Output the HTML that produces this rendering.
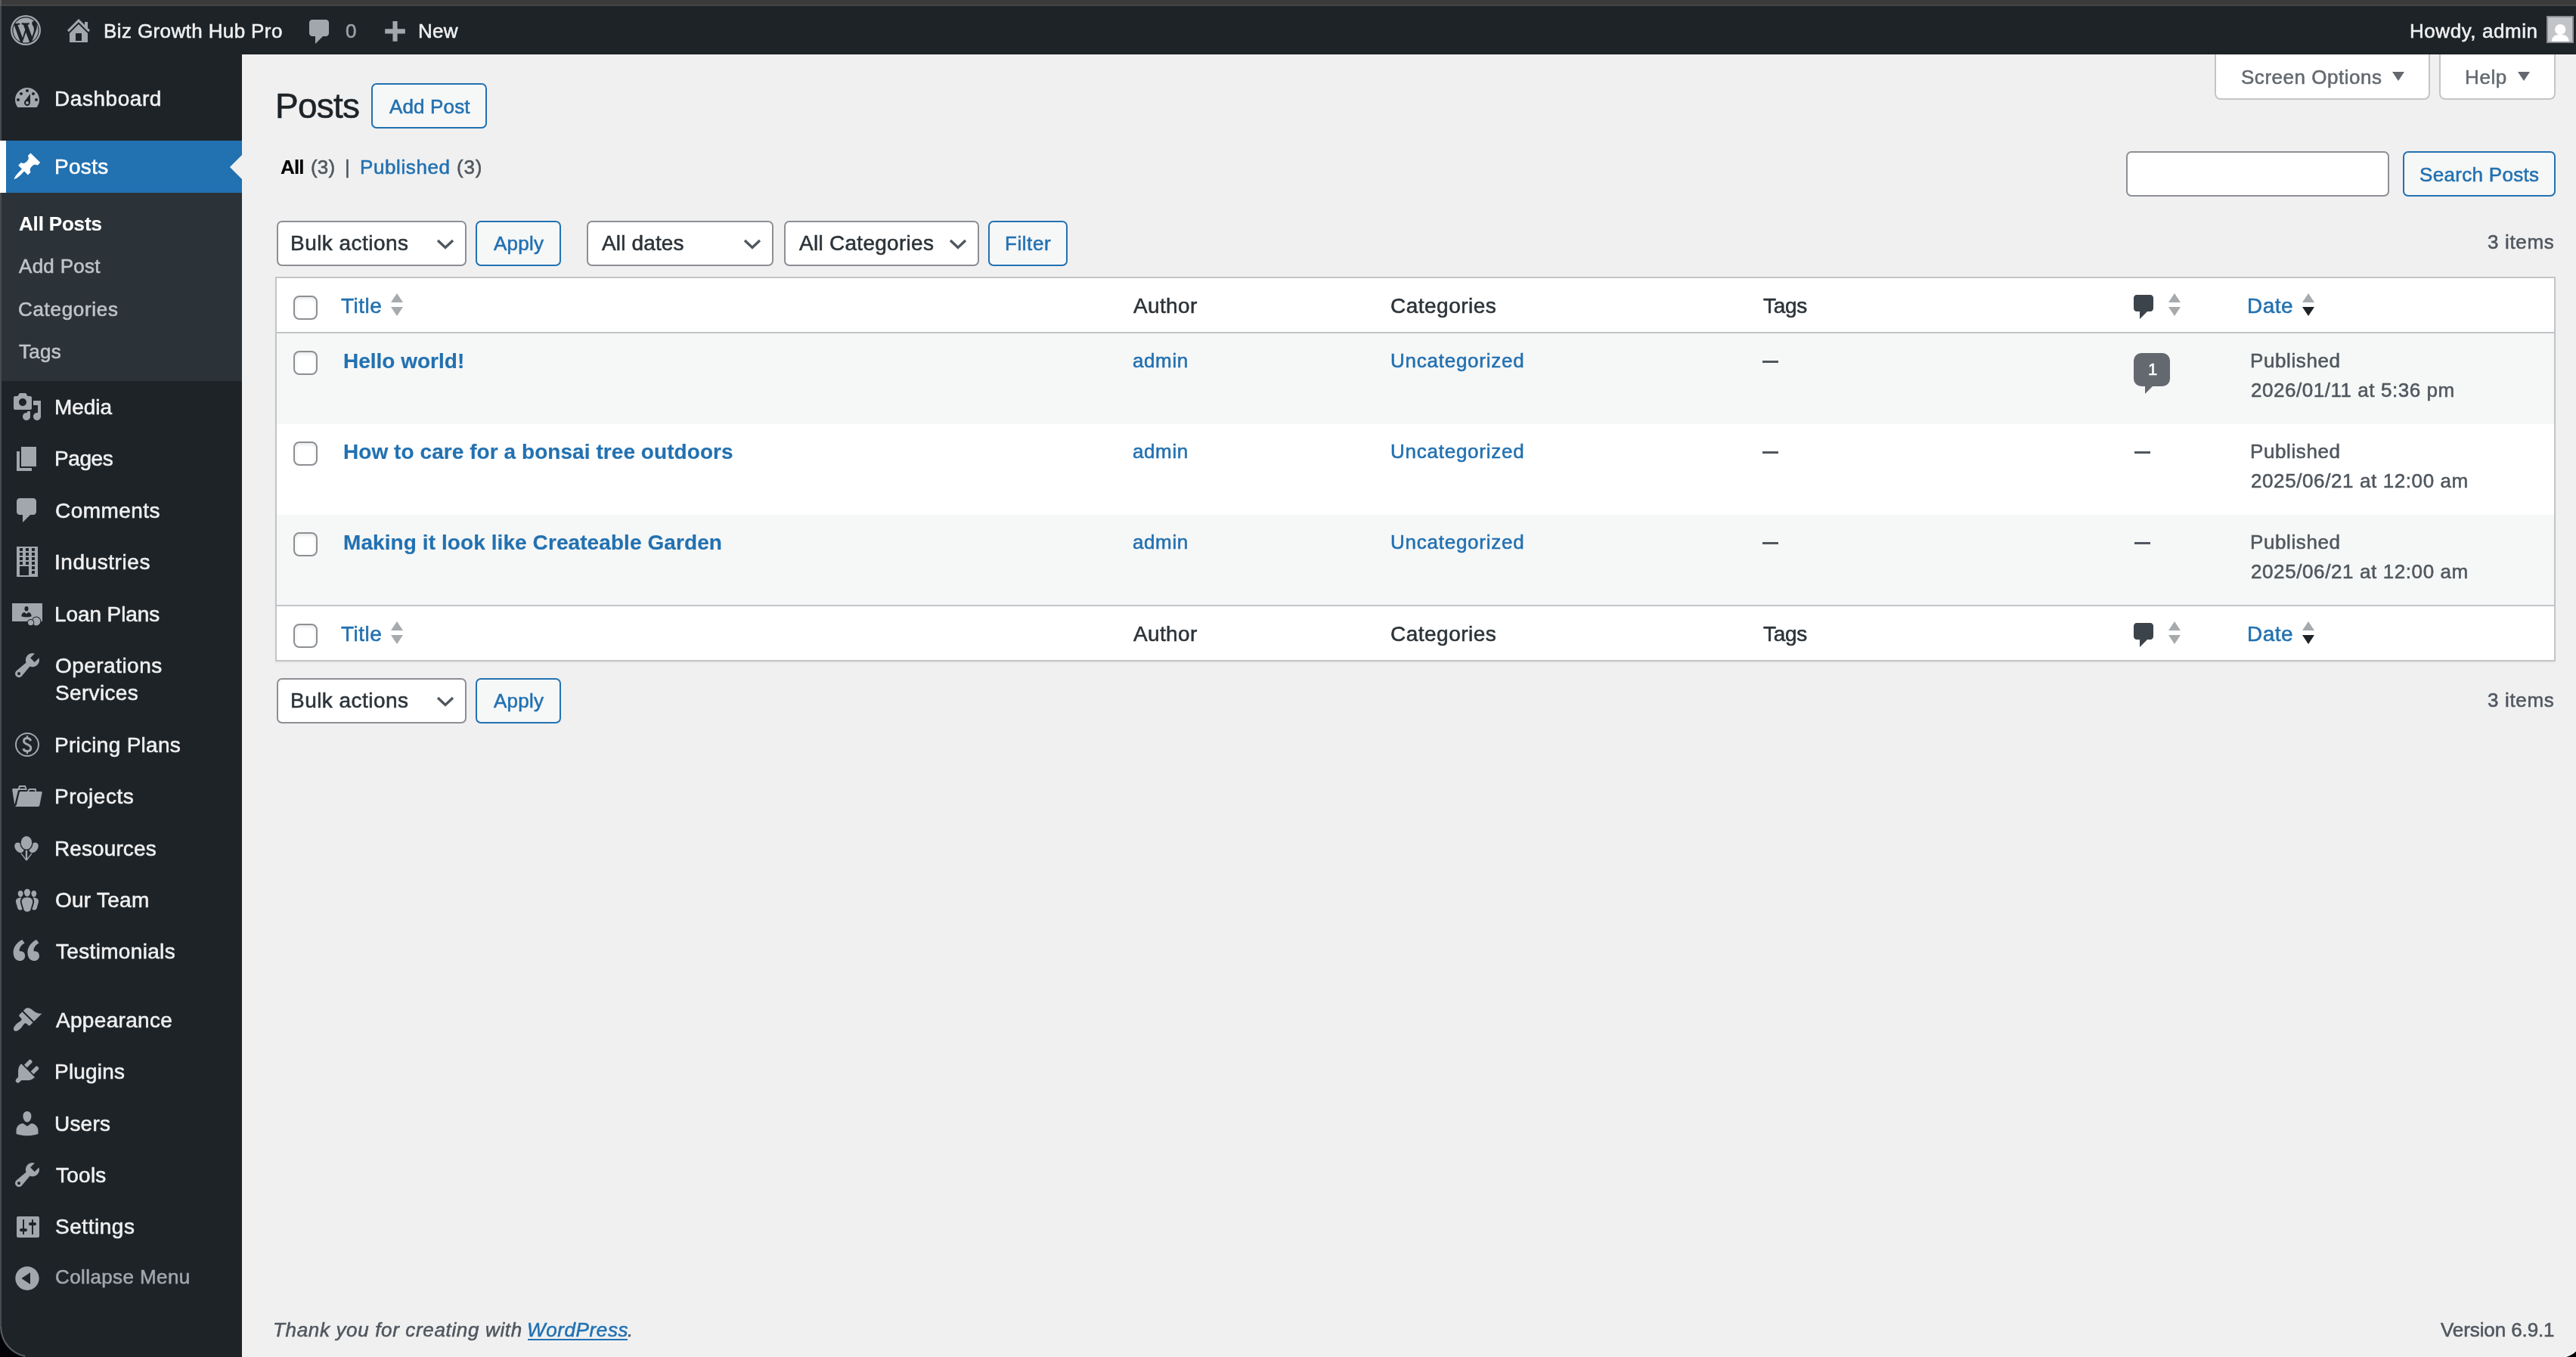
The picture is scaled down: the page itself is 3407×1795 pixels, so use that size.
<!DOCTYPE html>
<html lang="en"><head><meta charset="utf-8"><title>Posts</title><style>
*{box-sizing:border-box;margin:0;padding:0}
html,body{width:3407px;height:1795px;overflow:hidden;background:#f0f0f1}
body{position:relative;font-family:"Liberation Sans",sans-serif;color:#3c434a}
.a{position:absolute;display:block}
.t{position:absolute;white-space:pre;line-height:1;display:block;will-change:transform;-webkit-text-stroke:.55px}
.btn{border:2px solid #2271b1;border-radius:7px;background:#f6f7f7}
.inp{border:2px solid #8c8f94;border-radius:7px;background:#fff}
.so{border:2px solid #c3c4c7;border-top:none;border-radius:0 0 8px 8px;background:#fff}
.tri{width:0;height:0;border-left:8.3px solid transparent;border-right:8.3px solid transparent;border-top:12px solid #646970}
.cb{width:32px;height:32px;border:2px solid #8c8f94;border-radius:8px;background:#fff;box-shadow:inset 0 2px 4px rgba(0,0,0,.1)}
</style></head><body>
<div class="a" style="left:0;top:0;width:3407px;height:8px;background:#3b3b3b"></div>
<div class="a" style="left:0;top:6px;width:3407px;height:2px;background:#454545"></div>
<div class="a" style="left:0;top:8px;width:3407px;height:64px;background:#1d2327"></div>
<svg class="a" style="left:14px;top:20px" width="40" height="40" viewBox="0 0 20 20"><path fill="#a2a7ad" fill-rule="evenodd" d="M10 0a10 10 0 100 20 10 10 0 000-20zm0 1.1a8.9 8.9 0 110 17.8 8.9 8.9 0 010-17.8z"/><g transform="translate(10 10) scale(.934) translate(-10 -10)"><path fill="#a2a7ad" d="M7.78 15.37L4.37 6.22c.55-.02 1.17-.08 1.17-.08.5-.06.44-1.13-.06-1.11 0 0-1.45.11-2.37.11-.18 0-.37 0-.58-.01C4.12 2.69 6.87 1.11 10 1.11c2.33 0 4.45.87 6.05 2.34-.68-.11-1.65.39-1.65 1.58 0 .74.45 1.36.9 2.1.35.61.55 1.36.55 2.46 0 1.49-1.4 5-1.4 5l-3.03-8.37c.54-.02.82-.17.82-.17.5-.05.44-1.25-.06-1.22 0 0-1.44.12-2.38.12-.87 0-2.33-.12-2.33-.12-.5-.03-.56 1.2-.06 1.22l.92.08 1.26 3.41zM17.41 10c.24-.64.74-1.87.43-4.25.7 1.29 1.05 2.71 1.05 4.25 0 3.29-1.73 6.24-4.4 7.78.97-2.59 1.94-5.2 2.92-7.78zM6.1 18.09C3.12 16.65 1.11 13.53 1.11 10c0-1.3.23-2.48.72-3.59C3.25 10.3 4.67 14.2 6.1 18.09zM10.13 11.46l2.58 6.98c-.86.29-1.76.45-2.71.45-.79 0-1.57-.11-2.29-.33.81-2.38 1.62-4.74 2.42-7.1z"/></g></svg>
<svg class="a" style="left:84px;top:20px;" width="40" height="40" viewBox="0 0 20 20"><path fill="#a2a7ad" d="M16 8.5l1.53 1.53-1.06 1.06L10 4.62l-6.47 6.47-1.06-1.06L10 2.5l4 4v-2h2v4zm-6-2.46l6 5.99V18H4v-5.97zM12 17v-5H8v5h4z"/></svg>
<svg class="a" style="left:403px;top:22px;" width="40" height="40" viewBox="0 0 20 20"><path fill="#a2a7ad" d="M5 2h9c1.1 0 2 .9 2 2v7c0 1.1-.9 2-2 2h-2l-5 5v-5H5c-1.1 0-2-.9-2-2V4c0-1.1.9-2 2-2z"/></svg>
<svg class="a" style="left:501px;top:24px;" width="41" height="41" viewBox="0 0 20 20"><path fill="#a2a7ad" d="M17 7v3h-5v5H9v-5H4V7h5V2h3v5h5z"/></svg>
<div class="a" style="left:3368px;top:21px;width:36px;height:36px;background:#c3c4c7;border:2px solid #8c8f94;overflow:hidden"><svg width="32" height="32" viewBox="0 0 32 32" style="display:block"><circle cx="16.2" cy="16" r="7.1" fill="#fff"/><path d="M4.6 33c0-7.5 4.6-10.6 11.6-10.6s11.6 3.1 11.6 10.6z" fill="#fff"/></svg></div>
<div class="a" style="left:0;top:72px;width:320px;height:1723px;background:#1d2327"></div>
<div class="a" style="left:0;top:186.4px;width:320px;height:68.4px;background:#2271b1"></div>
<div class="a" style="left:304px;top:204.6px;width:0;height:0;border:16px solid transparent;border-right-color:#f0f0f1;border-left-width:0"></div>
<div class="a" style="left:0;top:254.8px;width:320px;height:249.4px;background:#2c3338"></div>
<svg class="a" style="left:16px;top:110px;" width="40" height="40" viewBox="0 0 20 20"><path fill="#a2a7ad" d="M3.76 16h12.48c1.1-1.37 1.76-3.11 1.76-5 0-4.42-3.58-8-8-8s-8 3.58-8 8c0 1.89.66 3.63 1.76 5zM10 4c.55 0 1 .45 1 1s-.45 1-1 1-1-.45-1-1 .45-1 1-1zM6 6c.55 0 1 .45 1 1s-.45 1-1 1-1-.45-1-1 .45-1 1-1zm8 0c.55 0 1 .45 1 1s-.45 1-1 1-1-.45-1-1 .45-1 1-1zm-5.37 5.55L12 7v6c0 1.1-.9 2-2 2s-2-.9-2-2c0-.57.24-1.08.63-1.45zM4 10c.55 0 1 .45 1 1s-.45 1-1 1-1-.45-1-1 .45-1 1-1zm12 0c.55 0 1 .45 1 1s-.45 1-1 1-1-.45-1-1 .45-1 1-1zm-5 3c0-.55-.45-1-1-1s-1 .45-1 1 .45 1 1 1 1-.45 1-1z"/></svg>
<svg class="a" style="left:16px;top:200.4px;" width="40" height="40" viewBox="0 0 20 20"><path fill="#fff" d="M10.44 3.02l1.82-1.82 6.36 6.35-1.83 1.82c-1.05-.68-2.48-.57-3.41.36l-.75.75c-.92.93-1.04 2.35-.35 3.41l-1.83 1.82-2.41-2.41-2.8 2.79c-.42.42-3.38 2.71-3.8 2.29s1.86-3.39 2.28-3.81l2.79-2.79L4.1 9.36l1.83-1.82c1.05.69 2.48.57 3.4-.36l.75-.75c.93-.92 1.05-2.35.36-3.41z"/></svg>
<svg class="a" style="left:16px;top:518.2px;" width="40" height="40" viewBox="0 0 20 20"><path fill="#a2a7ad" d="M13 11V4c0-.55-.45-1-1-1h-1.67L9 1H5L3.67 3H2c-.55 0-1 .45-1 1v7c0 .55.45 1 1 1h10c.55 0 1-.45 1-1zM7 4.5c1.38 0 2.5 1.12 2.5 2.5S8.38 9.5 7 9.5 4.5 8.38 4.5 7 5.62 4.5 7 4.5zM14 6h5v10.5c0 1.38-1.12 2.5-2.5 2.5S14 17.88 14 16.5s1.12-2.5 2.5-2.5c.17 0 .34.02.5.05V9h-3V6zm-4 8.05V13h2v3.5c0 1.38-1.12 2.5-2.5 2.5S7 17.88 7 16.5 8.12 14 9.5 14c.17 0 .34.02.5.05z"/></svg>
<svg class="a" style="left:16px;top:586.6px;" width="40" height="40" viewBox="0 0 20 20"><path fill="#a2a7ad" d="M6 15V2h10v13H6zm-1 1h8v2H3V5h2v11z"/></svg>
<svg class="a" style="left:16px;top:655.0px;" width="40" height="40" viewBox="0 0 20 20"><path fill="#a2a7ad" d="M5 2h9c1.1 0 2 .9 2 2v7c0 1.1-.9 2-2 2h-2l-5 5v-5H5c-1.1 0-2-.9-2-2V4c0-1.1.9-2 2-2z"/></svg>
<svg class="a" style="left:16px;top:723.4px;" width="40" height="40" viewBox="0 0 20 20"><path fill="#a2a7ad" d="M3 20h14V0H3v20zM7 3H5V1h2v2zm4 0H9V1h2v2zm4 0h-2V1h2v2zM7 6H5V4h2v2zm4 0H9V4h2v2zm4 0h-2V4h2v2zM7 9H5V7h2v2zm4 0H9V7h2v2zm4 0h-2V7h2v2zm-8 3H5v-2h2v2zm4 0H9v-2h2v2zm4 0h-2v-2h2v2zm-4 7H5v-6h6v6zm4-4h-2v-2h2v2zm0 3h-2v-2h2v2z"/></svg>
<svg class="a" style="left:16px;top:860.2px;" width="40" height="40" viewBox="0 0 20 20"><path fill="#a2a7ad" d="M16.68 9.77c-1.34 1.34-3.3 1.67-4.95.99l-5.41 6.52c-.99.99-2.59.99-3.58 0s-.99-2.59 0-3.57l6.52-5.42c-.68-1.65-.35-3.61.99-4.95 1.28-1.28 3.12-1.62 4.72-1.06l-2.89 2.89 2.82 2.82 2.86-2.87c.53 1.58.18 3.39-1.08 4.65zM3.81 16.21c.4.39 1.04.39 1.43 0 .4-.4.4-1.04 0-1.43-.39-.4-1.03-.4-1.43 0-.39.39-.39 1.03 0 1.43z"/></svg>
<svg class="a" style="left:16px;top:1033.4px;" width="40" height="40" viewBox="0 0 20 20"><path fill="#a2a7ad" d="M4 5H.78c-.37 0-.74.32-.69.84l1.56 9.99S3.5 8.47 3.86 6.7c.11-.53.61-.7.98-.7H10s-.7-2.08-.77-2.31C9.11 3.25 8.89 3 8.45 3H5.14c-.36 0-.7.23-.8.64C4.25 4.04 4 5 4 5zm4.88 0h-4s.42-1 .87-1h2.13c.48 0 1 1 1 1zM2.67 16.25c-.31.47-.76.75-1.26.75h15.73c.54 0 .92-.31 1.03-.83.44-2.19 1.68-8.44 1.68-8.44.07-.5-.3-.73-.62-.73H16V5.53c0-.16-.26-.53-.66-.53h-3.76c-.52 0-.87.58-.87.58L10 7H5.59c-.32 0-.63.19-.69.5 0 0-1.59 6.7-1.72 7.33-.07.37-.22.99-.51 1.42zM15.38 7H11s.58-1 1.13-1h2.29c.71 0 .96 1 .96 1z"/></svg>
<svg class="a" style="left:16px;top:1170.2px;" width="40" height="40" viewBox="0 0 20 20"><path fill="#a2a7ad" d="M8.03 4.46c-.29 1.28.55 3.46 1.97 3.46 1.41 0 2.25-2.18 1.96-3.46-.22-.98-1.08-1.63-1.96-1.63-.89 0-1.74.65-1.97 1.63zm-4.13.9c-.25 1.08.47 2.93 1.67 2.93s1.92-1.85 1.67-2.93c-.19-.83-.92-1.39-1.67-1.39s-1.48.56-1.67 1.39zm8.86 0c-.25 1.08.47 2.93 1.66 2.93 1.2 0 1.92-1.85 1.67-2.93-.19-.83-.92-1.39-1.67-1.39-.74 0-1.47.56-1.66 1.39zm-.59 11.43l1.25-4.3C14.2 10 12.71 8.47 10 8.47c-2.72 0-4.21 1.53-3.44 4.02l1.26 4.3C8.05 17.51 9 18 10 18c.98 0 1.94-.49 2.17-1.21zm-6.1-7.63c-.49.67-.96 1.83-.42 3.59l1.12 3.79c-.34.2-.77.31-1.2.31-.85 0-1.65-.41-1.85-1.03l-1.07-3.65c-.65-2.11.61-3.4 2.92-3.4.27 0 .54.02.79.06-.1.1-.2.22-.29.33zm8.35-.39c2.31 0 3.58 1.29 2.92 3.4l-1.07 3.65c-.2.62-1 1.03-1.85 1.03-.43 0-.86-.11-1.2-.31l1.11-3.77c.55-1.78.08-2.94-.42-3.61-.08-.11-.18-.23-.28-.33.25-.04.51-.06.79-.06z"/></svg>
<svg class="a" style="left:16px;top:1238.6px;" width="40" height="40" viewBox="0 0 20 20"><path fill="#a2a7ad" d="M8.54 12.74c0-.87-.24-1.61-.72-2.22-.73-.92-2.14-1.03-2.96-.85-.34-1.93 1.3-4.39 3.42-5.45L6.65 1.94C3.45 3.46.31 6.96.85 11.37 1.19 14.16 2.8 16 5.08 16c1 0 1.83-.29 2.48-.88.66-.59.98-1.38.98-2.38zm9.43 0c0-.87-.24-1.61-.72-2.22-.73-.92-2.14-1.03-2.96-.85-.34-1.93 1.3-4.39 3.42-5.45l-1.63-2.28c-3.2 1.52-6.34 5.02-5.8 9.43.34 2.79 1.95 4.63 4.23 4.63 1 0 1.83-.29 2.48-.88.66-.59.98-1.38.98-2.38z"/></svg>
<svg class="a" style="left:16px;top:1329.0px;" width="40" height="40" viewBox="0 0 20 20"><path fill="#a2a7ad" d="M14.48 11.06L7.41 3.99l1.5-1.5c.5-.56 2.3-.47 3.51.32 1.21.8 1.43 1.28 2.91 2.1 1.18.64 2.45 1.26 4.45.85zm-.71.71L6.7 4.7 4.93 6.47c-.39.39-.39 1.02 0 1.41l1.06 1.06c.39.39.39 1.03 0 1.42-.6.6-1.43 1.11-2.21 1.69-.35.26-.7.53-1.01.84C1.43 14.23.4 16.08 1.4 17.07c.99 1 2.84-.03 4.18-1.36.31-.31.58-.66.85-1.02.57-.78 1.08-1.61 1.69-2.21.39-.39 1.02-.39 1.41 0l1.06 1.06c.39.39 1.02.39 1.41 0z"/></svg>
<svg class="a" style="left:16px;top:1397.4px;" width="40" height="40" viewBox="0 0 20 20"><path fill="#a2a7ad" d="M13.11 4.36L9.87 7.6 8 5.73l3.24-3.24c.35-.34 1.05-.2 1.56.32.52.51.66 1.21.31 1.55zm-8 1.77l.91-1.12 9.01 9.01-1.19.84c-.71.71-2.63 1.16-3.82 1.16H6.14L4.9 17.26c-.59.59-1.54.59-2.12 0-.59-.58-.59-1.53 0-2.12l1.24-1.24v-3.88c0-1.13.4-3.19 1.09-3.89zm7.26 3.97l3.24-3.24c.34-.35 1.04-.21 1.55.31.52.51.66 1.21.31 1.55l-3.24 3.25z"/></svg>
<svg class="a" style="left:16px;top:1465.8px;" width="40" height="40" viewBox="0 0 20 20"><path fill="#a2a7ad" d="M10 9.25c-2.27 0-2.73-3.44-2.73-3.44C7 4.02 7.82 2 9.97 2c2.16 0 2.98 2.02 2.71 3.81 0 0-.41 3.44-2.68 3.44zm0 2.57L12.72 10c2.39 0 4.52 2.33 4.52 4.53v2.49s-3.65 1.13-7.24 1.13c-3.65 0-7.24-1.13-7.24-1.13v-2.49c0-2.25 1.94-4.48 4.47-4.48z"/></svg>
<svg class="a" style="left:16px;top:1534.2px;" width="40" height="40" viewBox="0 0 20 20"><path fill="#a2a7ad" d="M16.68 9.77c-1.34 1.34-3.3 1.67-4.95.99l-5.41 6.52c-.99.99-2.59.99-3.58 0s-.99-2.59 0-3.57l6.52-5.42c-.68-1.65-.35-3.61.99-4.95 1.28-1.28 3.12-1.62 4.72-1.06l-2.89 2.89 2.82 2.82 2.86-2.87c.53 1.58.18 3.39-1.08 4.65zM3.81 16.21c.4.39 1.04.39 1.43 0 .4-.4.4-1.04 0-1.43-.39-.4-1.03-.4-1.43 0-.39.39-.39 1.03 0 1.43z"/></svg>
<svg class="a" style="left:16px;top:1602.6px;" width="40" height="40" viewBox="0 0 20 20"><path fill="#a2a7ad" d="M18 16V4c0-.55-.45-1-1-1H4c-.55 0-1 .45-1 1v12c0 .55.45 1 1 1h13c.55 0 1-.45 1-1zM8 11h1c.55 0 1 .45 1 1s-.45 1-1 1H8v1.5c0 .28-.22.5-.5.5s-.5-.22-.5-.5V13H6c-.55 0-1-.45-1-1s.45-1 1-1h1V5.5c0-.28.22-.5.5-.5s.5.22.5.5V11zm5-2h-1c-.55 0-1-.45-1-1s.45-1 1-1h1V5.5c0-.28.22-.5.5-.5s.5.22.5.5V7h1c.55 0 1 .45 1 1s-.45 1-1 1h-1v5.5c0 .28-.22.5-.5.5s-.5-.22-.5-.5V9z"/></svg>
<svg class="a" style="left:16px;top:1671.0px;" width="40" height="40" viewBox="0 0 20 20"><path fill="#a2a7ad" d="M10 2.16c4.33 0 7.84 3.51 7.84 7.84s-3.51 7.84-7.84 7.84S2.16 14.33 2.16 10 5.67 2.16 10 2.16zm2 11.72V6.12L6.18 9.97z"/></svg>
<svg class="a" style="left:16px;top:791.8px" width="40" height="40" viewBox="0 0 20 20">
<rect x="0" y="3" width="20" height="12" fill="#a2a7ad"/>
<ellipse cx="9.5" cy="6.6" rx="1.25" ry="1.6" fill="#1d2327"/>
<path d="M6.2 11.6c0-1.5.9-2.6 2-2.6l1.3 1 1.3-1c1.1 0 2 1.1 2 2.6 0 0-1.2.55-3.3.55s-3.3-.55-3.3-.55z" fill="#1d2327"/>
<circle cx="16" cy="15" r="3.2" fill="#1d2327"/><circle cx="16" cy="15" r="2.7" fill="#a2a7ad"/>
<circle cx="12.3" cy="15.8" r="2.3" fill="#1d2327"/><circle cx="12.3" cy="15.8" r="1.8" fill="#a2a7ad"/>
</svg>
<svg class="a" style="left:16px;top:965.0px" width="40" height="40" viewBox="0 0 20 20">
<circle cx="10" cy="10" r="7.5" fill="none" stroke="#a2a7ad" stroke-width="1"/>
<path d="M12.35 7.5C12 6.3 11.2 5.75 10 5.75 8.6 5.75 7.75 6.5 7.75 7.65 7.75 10.3 12.4 9.3 12.4 12.25 12.4 13.6 11.4 14.35 10 14.35 8.6 14.35 7.75 13.7 7.4 12.6" fill="none" stroke="#a2a7ad" stroke-width="1.45"/><path d="M9.45 4h1.1v2h-1.1zM9.45 14.1h1.1v2h-1.1z" fill="#a2a7ad"/>
</svg>
<svg class="a" style="left:16px;top:1101.8px" width="40" height="40" viewBox="0 0 20 20">
<g stroke="#a2a7ad" fill="none"><path stroke-width=".7" d="M6 13.4L9.5 18.1M13 13.4L9.5 18.1"/><path stroke-width="1.2" d="M9.5 10.5V17.6"/></g>
<ellipse cx="4.75" cy="9.6" rx="2.7" ry="3.75" transform="rotate(-38 4.75 9.6)" fill="#a2a7ad"/>
<ellipse cx="14.25" cy="9.6" rx="2.7" ry="3.75" transform="rotate(38 14.25 9.6)" fill="#a2a7ad"/>
<ellipse cx="9.5" cy="6.4" rx="3.98" ry="4.73" fill="#a2a7ad" stroke="#1d2327" stroke-width=".66"/>
</svg>
<div class="a" style="left:0;top:8px;width:2px;height:1748px;background:#454b50"></div>
<div class="a" style="left:0;top:0;width:2px;height:8px;background:#585d62"></div>
<div class="a" style="left:0;top:186.4px;width:8px;height:68.4px;background:#fff"></div>
<div class="a btn" style="left:491px;top:110px;width:153px;height:60px"></div>
<div class="a so" style="left:2929px;top:72px;width:285px;height:60px"></div>
<div class="a tri" style="left:3163.6px;top:94.8px"></div>
<div class="a so" style="left:3226px;top:72px;width:154px;height:60px"></div>
<div class="a tri" style="left:3329.8px;top:94.8px"></div>
<div class="a inp" style="left:2812px;top:200px;width:348px;height:60px"></div>
<div class="a btn" style="left:3178px;top:200px;width:202px;height:60px"></div>
<div class="a inp" style="left:366px;top:292px;width:251px;height:60px"></div>
<svg class="a" style="left:577px;top:316px" width="24" height="14" viewBox="0 0 24 14"><path d="M2 2l10 9.5L22 2" fill="none" stroke="#50575e" stroke-width="3.4"/></svg>
<div class="a btn" style="left:629px;top:292px;width:113px;height:60px"></div>
<div class="a inp" style="left:776px;top:292px;width:247px;height:60px"></div>
<svg class="a" style="left:983px;top:316px" width="24" height="14" viewBox="0 0 24 14"><path d="M2 2l10 9.5L22 2" fill="none" stroke="#50575e" stroke-width="3.4"/></svg>
<div class="a inp" style="left:1037px;top:292px;width:258px;height:60px"></div>
<svg class="a" style="left:1255px;top:316px" width="24" height="14" viewBox="0 0 24 14"><path d="M2 2l10 9.5L22 2" fill="none" stroke="#50575e" stroke-width="3.4"/></svg>
<div class="a btn" style="left:1307px;top:292px;width:105px;height:60px"></div>
<div class="a" style="left:364px;top:366px;width:3016px;height:509px;background:#fff;border:2px solid #c3c4c7;box-shadow:0 2px 2px rgba(0,0,0,.04)"></div>
<div class="a" style="left:366px;top:439px;width:3012px;height:2px;background:#c3c4c7"></div>
<div class="a" style="left:366px;top:441px;width:3012px;height:120px;background:#f6f7f7"></div>
<div class="a" style="left:366px;top:681px;width:3012px;height:119px;background:#f6f7f7"></div>
<div class="a" style="left:366px;top:800px;width:3012px;height:2px;background:#c3c4c7"></div>
<div class="a cb" style="left:388px;top:391px"></div>
<svg class="a" style="left:517.3px;top:388.09999999999997px" width="16" height="30" viewBox="0 0 16 30"><path d="M8 0L16 12H0z" fill="#a7aaad"/><path d="M8 30L16 18H0z" fill="#a7aaad"/></svg>
<svg class="a" style="left:2816px;top:385.9px;" width="40" height="40" viewBox="0 0 20 20"><path fill="#3c434a" d="M5 2h9c1.1 0 2 .9 2 2v7c0 1.1-.9 2-2 2h-2l-5 5v-5H5c-1.1 0-2-.9-2-2V4c0-1.1.9-2 2-2z"/></svg>
<svg class="a" style="left:2868px;top:388.09999999999997px" width="16" height="30" viewBox="0 0 16 30"><path d="M8 0L16 12H0z" fill="#a7aaad"/><path d="M8 30L16 18H0z" fill="#a7aaad"/></svg>
<svg class="a" style="left:3045.2px;top:388.09999999999997px" width="16" height="30" viewBox="0 0 16 30"><path d="M8 0L16 12H0z" fill="#a7aaad"/><path d="M8 30L16 18H0z" fill="#1d2327"/></svg>
<div class="a cb" style="left:388px;top:825px"></div>
<svg class="a" style="left:517.3px;top:822.0px" width="16" height="30" viewBox="0 0 16 30"><path d="M8 0L16 12H0z" fill="#a7aaad"/><path d="M8 30L16 18H0z" fill="#a7aaad"/></svg>
<svg class="a" style="left:2816px;top:819.8px;" width="40" height="40" viewBox="0 0 20 20"><path fill="#3c434a" d="M5 2h9c1.1 0 2 .9 2 2v7c0 1.1-.9 2-2 2h-2l-5 5v-5H5c-1.1 0-2-.9-2-2V4c0-1.1.9-2 2-2z"/></svg>
<svg class="a" style="left:2868px;top:822.0px" width="16" height="30" viewBox="0 0 16 30"><path d="M8 0L16 12H0z" fill="#a7aaad"/><path d="M8 30L16 18H0z" fill="#a7aaad"/></svg>
<svg class="a" style="left:3045.2px;top:822.0px" width="16" height="30" viewBox="0 0 16 30"><path d="M8 0L16 12H0z" fill="#a7aaad"/><path d="M8 30L16 18H0z" fill="#1d2327"/></svg>
<div class="a cb" style="left:388px;top:464px"></div>
<div class="a" style="left:2331px;top:477px;width:21px;height:3px;background:#50575e"></div>
<div class="a" style="left:2822px;top:467px;width:48px;height:44px;background:#646970;border-radius:10px"></div>
<div class="a" style="left:2837px;top:509px;width:0;height:0;border-top:12px solid #646970;border-right:12px solid transparent"></div>
<div class="a cb" style="left:388px;top:584px"></div>
<div class="a" style="left:2331px;top:597px;width:21px;height:3px;background:#50575e"></div>
<div class="a" style="left:2823px;top:597px;width:21px;height:3px;background:#50575e"></div>
<div class="a cb" style="left:388px;top:704px"></div>
<div class="a" style="left:2331px;top:717px;width:21px;height:3px;background:#50575e"></div>
<div class="a" style="left:2823px;top:717px;width:21px;height:3px;background:#50575e"></div>
<div class="a inp" style="left:366px;top:897px;width:251px;height:60px"></div>
<svg class="a" style="left:577px;top:921px" width="24" height="14" viewBox="0 0 24 14"><path d="M2 2l10 9.5L22 2" fill="none" stroke="#50575e" stroke-width="3.4"/></svg>
<div class="a btn" style="left:629px;top:897px;width:113px;height:60px"></div>
<div class="a ul" style="left:698px;top:1770.5px;width:132px;height:2px;background:#2271b1"></div>
<svg class="a" style="left:0;top:1745px" width="50" height="50" viewBox="0 0 50 50"><path d="M0 10A40.7 40.7 0 0 0 33 50" fill="none" stroke="#555a5f" stroke-width="4.4"/><path d="M-1 0V10H0A40.7 40.7 0 0 0 33 50H-1z" fill="#020307"/></svg>
<svg class="a" style="left:3391px;top:1783px" width="16" height="12" viewBox="0 0 16 12"><path d="M3 12Q11 9.2 16 4" fill="none" stroke="#fbfbfb" stroke-width="2"/><path d="M3.4 12Q11.2 9.4 16 4.6V12z" fill="#020307"/></svg>
<span class="t" id="t0" style="left:137.30px;top:27.69px;font-size:26px;color:#f0f0f1;letter-spacing:0.388px;">Biz Growth Hub Pro</span>
<span class="t" id="t1" style="left:457.10px;top:27.99px;font-size:26px;color:#9ca2a7;">0</span>
<span class="t" id="t2" style="left:553.40px;top:27.69px;font-size:26px;color:#f0f0f1;letter-spacing:0.300px;">New</span>
<span class="t" id="t3" style="left:3187.10px;top:27.99px;font-size:26px;color:#f0f0f1;letter-spacing:0.564px;">Howdy, admin</span>
<span class="t" id="t4" style="left:71.70px;top:116.80px;font-size:28px;color:#f0f0f1;letter-spacing:0.550px;">Dashboard</span>
<span class="t" id="t5" style="left:71.70px;top:207.20px;font-size:28px;color:#fff;letter-spacing:0.300px;">Posts</span>
<span class="t" id="t6" style="left:24.80px;top:283.09px;font-size:26px;color:#fff;font-weight:700;-webkit-text-stroke:.15px;letter-spacing:-0.175px;">All Posts</span>
<span class="t" id="t7" style="left:24.80px;top:338.79px;font-size:26px;color:#c0c4c8;letter-spacing:0.286px;">Add Post</span>
<span class="t" id="t8" style="left:23.80px;top:395.99px;font-size:26px;color:#c0c4c8;letter-spacing:0.689px;">Categories</span>
<span class="t" id="t9" style="left:24.80px;top:451.79px;font-size:26px;color:#c0c4c8;letter-spacing:0.267px;">Tags</span>
<span class="t" id="t10" style="left:71.70px;top:525.00px;font-size:28px;color:#f0f0f1;letter-spacing:-0.050px;">Media</span>
<span class="t" id="t11" style="left:71.70px;top:593.40px;font-size:28px;color:#f0f0f1;letter-spacing:-0.400px;">Pages</span>
<span class="t" id="t12" style="left:72.70px;top:661.80px;font-size:28px;color:#f0f0f1;letter-spacing:0.457px;">Comments</span>
<span class="t" id="t13" style="left:71.70px;top:730.20px;font-size:28px;color:#f0f0f1;letter-spacing:0.556px;">Industries</span>
<span class="t" id="t14" style="left:71.70px;top:798.60px;font-size:28px;color:#f0f0f1;letter-spacing:-0.089px;">Loan Plans</span>
<span class="t" id="t15" style="left:72.70px;top:867.00px;font-size:28px;color:#f0f0f1;letter-spacing:0.467px;">Operations</span>
<span class="t" id="t16" style="left:72.70px;top:903.40px;font-size:28px;color:#f0f0f1;letter-spacing:0.343px;">Services</span>
<span class="t" id="t17" style="left:71.70px;top:971.80px;font-size:28px;color:#f0f0f1;letter-spacing:0.283px;">Pricing Plans</span>
<span class="t" id="t18" style="left:71.70px;top:1040.20px;font-size:28px;color:#f0f0f1;letter-spacing:0.514px;">Projects</span>
<span class="t" id="t19" style="left:71.70px;top:1108.60px;font-size:28px;color:#f0f0f1;letter-spacing:0.100px;">Resources</span>
<span class="t" id="t20" style="left:72.70px;top:1177.00px;font-size:28px;color:#f0f0f1;letter-spacing:0.257px;">Our Team</span>
<span class="t" id="t21" style="left:73.70px;top:1245.40px;font-size:28px;color:#f0f0f1;letter-spacing:0.327px;">Testimonials</span>
<span class="t" id="t22" style="left:73.70px;top:1335.80px;font-size:28px;color:#f0f0f1;letter-spacing:0.311px;">Appearance</span>
<span class="t" id="t23" style="left:71.70px;top:1404.20px;font-size:28px;color:#f0f0f1;letter-spacing:0.200px;">Plugins</span>
<span class="t" id="t24" style="left:71.70px;top:1472.60px;font-size:28px;color:#f0f0f1;letter-spacing:0.200px;">Users</span>
<span class="t" id="t25" style="left:73.70px;top:1541.00px;font-size:28px;color:#f0f0f1;letter-spacing:0.250px;">Tools</span>
<span class="t" id="t26" style="left:72.70px;top:1609.40px;font-size:28px;color:#f0f0f1;letter-spacing:0.543px;">Settings</span>
<span class="t" id="t27" style="left:72.90px;top:1676.19px;font-size:26px;color:#a2a7ad;letter-spacing:0.400px;">Collapse Menu</span>
<span class="t" id="t28" style="left:363.90px;top:116.96px;font-size:46px;color:#1d2327;letter-spacing:-0.750px;">Posts</span>
<span class="t" id="t29" style="left:514.90px;top:127.59px;font-size:26px;color:#2271b1;letter-spacing:0.143px;">Add Post</span>
<span class="t" id="t30" style="left:2963.90px;top:89.19px;font-size:26px;color:#646970;letter-spacing:0.523px;">Screen Options</span>
<span class="t" id="t31" style="left:3260.30px;top:89.19px;font-size:26px;color:#646970;letter-spacing:0.600px;">Help</span>
<span class="t" id="t32" style="left:371.30px;top:208.39px;font-size:26px;color:#000;font-weight:700;-webkit-text-stroke:.15px;letter-spacing:-0.900px;">All</span>
<span class="t" id="t33" style="left:411.30px;top:208.39px;font-size:26px;color:#50575e;letter-spacing:0.200px;">(3)</span>
<span class="t" id="t34" style="left:455.90px;top:208.39px;font-size:26px;color:#50575e;">|</span>
<span class="t" id="t35" style="left:475.70px;top:208.39px;font-size:26px;color:#2271b1;letter-spacing:0.600px;">Published</span>
<span class="t" id="t36" style="left:604.10px;top:208.39px;font-size:26px;color:#50575e;letter-spacing:0.800px;">(3)</span>
<span class="t" id="t37" style="left:3199.90px;top:218.29px;font-size:26px;color:#2271b1;letter-spacing:0.309px;">Search Posts</span>
<span class="t" id="t38" style="left:383.90px;top:308.40px;font-size:28px;color:#2c3338;letter-spacing:0.455px;">Bulk actions</span>
<span class="t" id="t39" style="left:652.90px;top:309.49px;font-size:26px;color:#2271b1;letter-spacing:0.250px;">Apply</span>
<span class="t" id="t40" style="left:795.90px;top:308.40px;font-size:28px;color:#2c3338;letter-spacing:0.150px;">All dates</span>
<span class="t" id="t41" style="left:1056.70px;top:308.40px;font-size:28px;color:#2c3338;letter-spacing:0.277px;">All Categories</span>
<span class="t" id="t42" style="left:1328.70px;top:309.49px;font-size:26px;color:#2271b1;letter-spacing:0.560px;">Filter</span>
<span class="t" id="t43" style="left:3290.40px;top:306.99px;font-size:26px;color:#50575e;letter-spacing:0.667px;">3 items</span>
<span class="t" id="t44" style="left:451.10px;top:390.70px;font-size:28px;color:#2271b1;letter-spacing:0.500px;">Title</span>
<span class="t" id="t45" style="left:1498.90px;top:390.70px;font-size:28px;color:#2c3338;letter-spacing:0.360px;">Author</span>
<span class="t" id="t46" style="left:1838.90px;top:390.70px;font-size:28px;color:#2c3338;letter-spacing:0.489px;">Categories</span>
<span class="t" id="t47" style="left:2332.40px;top:390.70px;font-size:28px;color:#2c3338;letter-spacing:-0.333px;">Tags</span>
<span class="t" id="t48" style="left:2971.90px;top:390.70px;font-size:28px;color:#2271b1;letter-spacing:0.467px;">Date</span>
<span class="t" id="t49" style="left:451.10px;top:824.60px;font-size:28px;color:#2271b1;letter-spacing:0.500px;">Title</span>
<span class="t" id="t50" style="left:1498.90px;top:824.60px;font-size:28px;color:#2c3338;letter-spacing:0.360px;">Author</span>
<span class="t" id="t51" style="left:1838.90px;top:824.60px;font-size:28px;color:#2c3338;letter-spacing:0.489px;">Categories</span>
<span class="t" id="t52" style="left:2332.40px;top:824.60px;font-size:28px;color:#2c3338;letter-spacing:-0.333px;">Tags</span>
<span class="t" id="t53" style="left:2971.90px;top:824.60px;font-size:28px;color:#2271b1;letter-spacing:0.467px;">Date</span>
<span class="t" id="t54" style="left:453.70px;top:463.70px;font-size:28px;color:#2271b1;font-weight:700;-webkit-text-stroke:.15px;">Hello world!</span>
<span class="t" id="t55" style="left:1497.90px;top:464.29px;font-size:26px;color:#2271b1;letter-spacing:0.600px;">admin</span>
<span class="t" id="t56" style="left:1838.90px;top:464.29px;font-size:26px;color:#2271b1;letter-spacing:0.750px;">Uncategorized</span>
<span class="t" id="t57" style="left:2840.90px;top:478.38px;font-size:22px;color:#fff;">1</span>
<span class="t" id="t58" style="left:2975.90px;top:464.39px;font-size:26px;color:#50575e;letter-spacing:0.600px;">Published</span>
<span class="t" id="t59" style="left:2976.90px;top:503.29px;font-size:26px;color:#50575e;letter-spacing:0.540px;">2026/01/11 at 5:36 pm</span>
<span class="t" id="t60" style="left:453.70px;top:583.70px;font-size:28px;color:#2271b1;font-weight:700;-webkit-text-stroke:.15px;letter-spacing:0.059px;">How to care for a bonsai tree outdoors</span>
<span class="t" id="t61" style="left:1497.90px;top:584.29px;font-size:26px;color:#2271b1;letter-spacing:0.600px;">admin</span>
<span class="t" id="t62" style="left:1838.90px;top:584.29px;font-size:26px;color:#2271b1;letter-spacing:0.750px;">Uncategorized</span>
<span class="t" id="t63" style="left:2975.90px;top:584.39px;font-size:26px;color:#50575e;letter-spacing:0.600px;">Published</span>
<span class="t" id="t64" style="left:2976.90px;top:623.29px;font-size:26px;color:#50575e;letter-spacing:0.600px;">2025/06/21 at 12:00 am</span>
<span class="t" id="t65" style="left:453.70px;top:703.70px;font-size:28px;color:#2271b1;font-weight:700;-webkit-text-stroke:.15px;letter-spacing:0.083px;">Making it look like Createable Garden</span>
<span class="t" id="t66" style="left:1497.90px;top:704.29px;font-size:26px;color:#2271b1;letter-spacing:0.600px;">admin</span>
<span class="t" id="t67" style="left:1838.90px;top:704.29px;font-size:26px;color:#2271b1;letter-spacing:0.750px;">Uncategorized</span>
<span class="t" id="t68" style="left:2975.90px;top:704.39px;font-size:26px;color:#50575e;letter-spacing:0.600px;">Published</span>
<span class="t" id="t69" style="left:2976.90px;top:743.29px;font-size:26px;color:#50575e;letter-spacing:0.600px;">2025/06/21 at 12:00 am</span>
<span class="t" id="t70" style="left:383.90px;top:913.40px;font-size:28px;color:#2c3338;letter-spacing:0.455px;">Bulk actions</span>
<span class="t" id="t71" style="left:652.90px;top:914.49px;font-size:26px;color:#2271b1;letter-spacing:0.250px;">Apply</span>
<span class="t" id="t72" style="left:3290.40px;top:913.29px;font-size:26px;color:#50575e;letter-spacing:0.667px;">3 items</span>
<span class="t" id="t73" style="left:360.50px;top:1745.89px;font-size:26px;color:#50575e;font-style:italic;letter-spacing:0.654px;">Thank you for creating with</span>
<span class="t" id="t74" style="left:696.50px;top:1745.89px;font-size:26px;color:#2271b1;font-style:italic;letter-spacing:0.625px;">WordPress</span>
<span class="t ul" id="t75" style="left:830.30px;top:1745.89px;font-size:26px;color:#50575e;font-style:italic;">.</span>
<span class="t" id="t76" style="left:3228.30px;top:1745.79px;font-size:26px;color:#50575e;letter-spacing:-0.100px;">Version 6.9.1</span>
</body></html>
